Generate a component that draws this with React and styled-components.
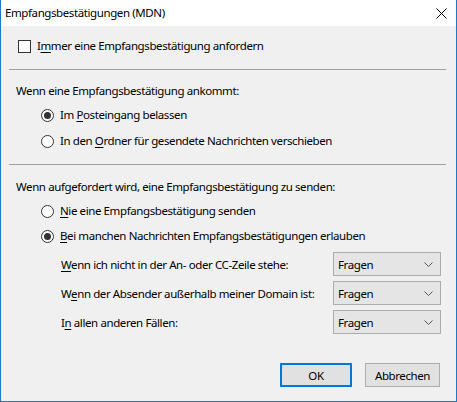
import React from "react";
import styled, { createGlobalStyle } from "styled-components";

const Global = createGlobalStyle`
  html, body { margin: 0; padding: 0; background: #fff; }
  body { font-family: "Noto Sans", "Open Sans", sans-serif; font-size: 11.5px; letter-spacing: -0.4px; color: #000; }
  * { box-sizing: border-box; }
`;

const Window = styled.div`
  width: 457px;
  height: 402px;
  border: 1px solid #1979ca;
  border-top: none;
  background: #f0f0f0;
  display: flex;
  flex-direction: column;
`;

const TitleBar = styled.div`
  height: 26px;
  background: #fff;
  display: flex;
  align-items: center;
  justify-content: space-between;
  padding: 0 9px 0 4px;
  line-height: 16px;
`;

const Close = styled.button`
  border: none;
  background: none;
  padding: 0;
  width: 12px;
  height: 12px;
  display: flex;
  align-items: center;
  justify-content: center;
`;

const Body = styled.div`
  flex: 1;
  display: flex;
  flex-direction: column;
  padding: 12px 0 0 14px;
`;

const Line = styled.div`
  height: 16px;
  line-height: 16px;
  display: flex;
  align-items: center;
  white-space: nowrap;
  margin-top: ${(p) => p.$mt || 0}px;
  padding-left: ${(p) => p.$indent || 0}px;
`;

const Separator = styled.div`
  height: 1px;
  background: #a0a0a0;
  margin: ${(p) => p.$mt}px 10px 0 -6px;
`;

const Box = styled.span`
  width: 13px;
  height: 13px;
  border: 1px solid #333;
  background: #fff;
  margin-right: 6px;
  flex: none;
`;

const Radio = styled.span`
  width: 13px;
  height: 13px;
  border-radius: 50%;
  border: 1px solid #333;
  background: #fff;
  margin-right: 6px;
  flex: none;
  display: flex;
  align-items: center;
  justify-content: center;
  &::after {
    content: "";
    width: 7px;
    height: 7px;
    border-radius: 50%;
    background: ${(p) => (p.$checked ? "#333" : "transparent")};
  }
`;

const U = styled.span`
  text-decoration: underline;
  text-underline-offset: 2px;
`;

const SelectRow = styled.div`
  height: 24px;
  display: flex;
  align-items: center;
  justify-content: space-between;
  padding: 0 15px 0 46px;
  margin-top: ${(p) => p.$mt}px;
  white-space: nowrap;
`;

const Select = styled.div`
  width: 108px;
  height: 24px;
  border: 1px solid #acacac;
  background: #e5e5e5;
  display: flex;
  align-items: center;
  justify-content: space-between;
  padding: 0 7px 0 4px;
`;

const Buttons = styled.div`
  display: flex;
  justify-content: flex-end;
  gap: 13px;
  margin-top: 29px;
  padding-right: 16px;
`;

const Button = styled.button`
  width: ${(p) => p.$w}px;
  height: 24px;
  font: inherit;
  letter-spacing: inherit;
  color: #000;
  background: #e1e1e1;
  border: ${(p) => (p.$default ? "2px solid #0078d7" : "1px solid #adadad")};
  padding: 0;
`;

const Chevron = () => (
  <svg width="9" height="5" viewBox="0 0 9 5">
    <path d="M0.5 0.5 L4.5 4.5 L8.5 0.5" fill="none" stroke="#555" strokeWidth="1" />
  </svg>
);

export default function App() {
  return (
    <>
      <Global />
      <Window>
        <TitleBar>
          <span>Empfangsbestätigungen (MDN)</span>
          <Close aria-label="Schließen">
            <svg width="11" height="11" viewBox="0 0 11 11">
              <path d="M0.5 0.5 L10.5 10.5 M10.5 0.5 L0.5 10.5" stroke="#000" strokeWidth="1" />
            </svg>
          </Close>
        </TitleBar>
        <Body>
          <Line $indent={3}>
            <Box />
            <span>I<U>m</U>mer eine Empfangsbestätigung anfordern</span>
          </Line>
          <Separator $mt={15} />
          <Line $mt={13} $indent={1}>Wenn eine Empfangsbestätigung ankommt:</Line>
          <Line $mt={8} $indent={26}>
            <Radio $checked />
            <span>Im <U>P</U>osteingang belassen</span>
          </Line>
          <Line $mt={10} $indent={26}>
            <Radio />
            <span>In den <U>O</U>rdner für gesendete Nachrichten verschieben</span>
          </Line>
          <Separator $mt={15} />
          <Line $mt={14} $indent={1}>Wenn aufgefordert wird, eine Empfangsbestätigung zu senden:</Line>
          <Line $mt={8} $indent={26}>
            <Radio />
            <span><U>N</U>ie eine Empfangsbestätigung senden</span>
          </Line>
          <Line $mt={9} $indent={26}>
            <Radio $checked />
            <span><U>B</U>ei manchen Nachrichten Empfangsbestätigungen erlauben</span>
          </Line>
          <SelectRow $mt={8}>
            <span><U>W</U>enn ich nicht in der An- oder CC-Zeile stehe:</span>
            <Select><span>Fragen</span><Chevron /></Select>
          </SelectRow>
          <SelectRow $mt={5}>
            <span>W<U>e</U>nn der Absender außerhalb meiner Domain ist:</span>
            <Select><span>Fragen</span><Chevron /></Select>
          </SelectRow>
          <SelectRow $mt={5}>
            <span>I<U>n</U> allen anderen Fällen:</span>
            <Select><span>Fragen</span><Chevron /></Select>
          </SelectRow>
          <Buttons>
            <Button $w={72} $default>OK</Button>
            <Button $w={75}>Abbrechen</Button>
          </Buttons>
        </Body>
      </Window>
    </>
  );
}
